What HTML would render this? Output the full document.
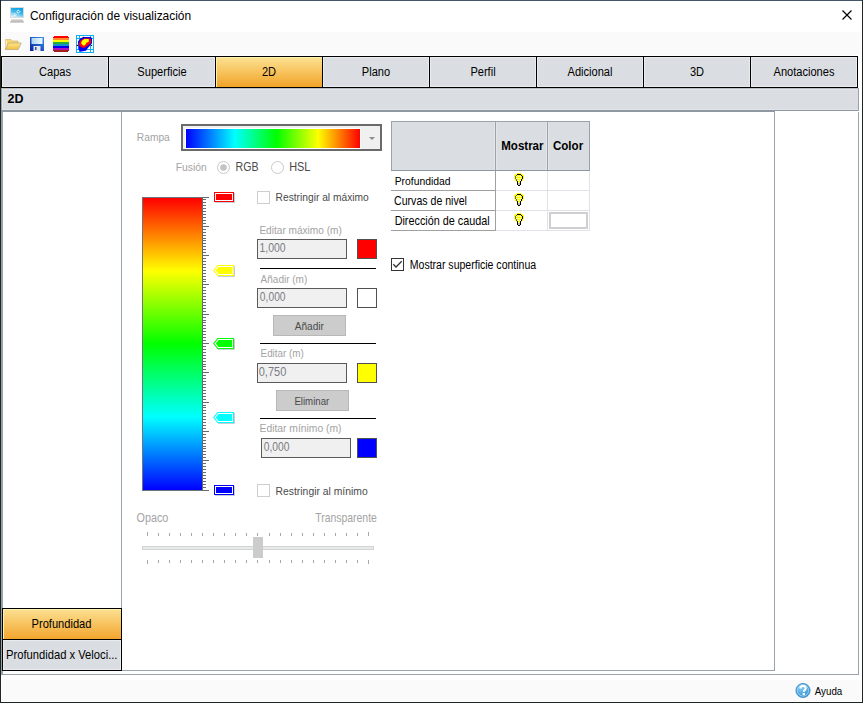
<!DOCTYPE html>
<html><head><meta charset="utf-8">
<style>
*{margin:0;padding:0;box-sizing:border-box}
html,body{width:863px;height:703px;overflow:hidden;background:#fff}
body{position:relative;font-family:"Liberation Sans",sans-serif;font-size:11px;color:#000}
.a{position:absolute}
.t{position:absolute;white-space:nowrap;line-height:16px;height:16px}
.tab{position:absolute;top:56px;height:32px;border:1px solid #000;background:#dadee2;box-shadow:inset 1px 1px 0 #e9ecef, inset -1px -1px 0 #e9ecef}
.tl{position:absolute;left:0;right:0;top:4px;text-align:center;font-size:11.1px;line-height:16px;white-space:nowrap}
.tb{position:absolute;height:20px;border:1px solid #5a5a5a;background:#f0f0f0}
.sw{position:absolute;width:20px;height:20px;border:1px solid #505050}
.sep{position:absolute;height:1px;background:#000;left:260px;width:116px}
.btn{position:absolute;background:#cccccc;border:1px solid #b8b8b8}
.cb{position:absolute;width:13px;height:13px;border:1px solid #cdcdcd;background:#fff}
</style></head>
<body>
<!-- window border -->
<div class="a" style="left:0;top:0;width:863px;height:1px;background:#44546a"></div>
<div class="a" style="left:0;top:0;width:1px;height:703px;background:#1e2620"></div>
<div class="a" style="left:862px;top:0;width:1px;height:703px;background:#1e2620"></div>
<div class="a" style="left:0;top:702px;width:863px;height:1px;background:#1e2620"></div>

<!-- title icon -->
<svg class="a" style="left:9px;top:7px" width="16" height="17" viewBox="0 0 16 17">
 <defs><linearGradient id="scr" x1=".7" y1="0" x2=".3" y2="1"><stop offset="0" stop-color="#00a0e4"/><stop offset=".5" stop-color="#40b8ec"/><stop offset="1" stop-color="#e4f4fb"/></linearGradient>
 <linearGradient id="kb" x1="0" y1="0" x2="0" y2="1"><stop offset="0" stop-color="#e4e4e4"/><stop offset="1" stop-color="#a8a8a8"/></linearGradient></defs>
 <rect x="1.5" y="0.5" width="13" height="10" fill="url(#scr)" stroke="#dcdcdc"/>
 <path d="M9.3 3L10.9 4.6L9.3 6.2L7.7 4.6Z" fill="none" stroke="#fff" stroke-width=".9"/>
 <path d="M6 6.3L7.3 7.6L6 8.9L4.7 7.6Z" fill="none" stroke="#fff" stroke-width=".8"/>
 <path d="M2.5 12H13.5L15 15.5H1Z" fill="url(#kb)"/>
</svg>
<!-- close X -->
<svg class="a" style="left:842px;top:10px" width="10" height="10"><path d="M0.5 0.5L9.5 9.5M9.5 0.5L0.5 9.5" stroke="#000" stroke-width="1.15"/></svg>

<!-- toolbar bg -->
<div class="a" style="left:2px;top:32px;width:859px;height:23px;background:#fafafa"></div>
<!-- folder -->
<svg class="a" style="left:5px;top:39px" width="17" height="11" viewBox="0 0 17 11">
 <defs><linearGradient id="fd" x1="0" y1="0" x2="0" y2="1"><stop offset="0" stop-color="#fde78e"/><stop offset="1" stop-color="#f2bf3c"/></linearGradient></defs>
 <path d="M0.5 0.5H6L7 2H13V4.5H3.2L0.5 10.5Z" fill="#f9d86a" stroke="#c8b070" stroke-width=".6"/>
 <path d="M1.2 1.5V9" stroke="#fff" stroke-width=".8"/>
 <path d="M3.4 4H16.2L13.2 10.5H0.6Z" fill="url(#fd)" stroke="#a89a78" stroke-width=".6"/>
</svg>
<!-- floppy -->
<svg class="a" style="left:30px;top:37px" width="14" height="14" viewBox="0 0 14 14">
 <defs><linearGradient id="fl" x1="0" y1="0" x2="1" y2="0"><stop offset="0" stop-color="#a8d4f0"/><stop offset="1" stop-color="#f0f8ff"/></linearGradient>
 <linearGradient id="fb" x1="0" y1="1" x2="1" y2="0"><stop offset="0" stop-color="#0a1e98"/><stop offset=".5" stop-color="#1e56c8"/><stop offset="1" stop-color="#3a9ae8"/></linearGradient></defs>
 <rect x="0" y="0" width="14" height="14" fill="url(#fb)"/>
 <rect x="1.5" y="1" width="11" height="6" fill="url(#fl)"/>
 <rect x="3.5" y="9" width="7" height="5" fill="#e8e8e8"/>
 <rect x="5" y="10" width="1.5" height="3" fill="#1d56c0"/>
</svg>
<!-- rainbow -->
<svg class="a" style="left:53px;top:36px" width="16" height="16" viewBox="0 0 16 16" shape-rendering="crispEdges">
 <path d="M1 0H15L16 1V15L15 16H1L0 15V1Z" fill="#a02020"/>
 <rect x="0" y="0" width="16" height="2" fill="#ff0000"/>
 <rect x="1" y="0" width="14" height="1" fill="#ff0000"/>
 <rect x="0" y="2" width="16" height="2" fill="#ff8c28"/>
 <rect x="0" y="4" width="16" height="2" fill="#ffff00"/>
 <rect x="0" y="6" width="16" height="2" fill="#20b040"/>
 <rect x="0" y="8" width="16" height="2" fill="#1890c8"/>
 <rect x="0" y="10" width="16" height="2" fill="#0000f0"/>
 <rect x="0" y="12" width="16" height="2" fill="#b010c0"/>
 <path d="M0 14H16V15L15 16H1L0 15Z" fill="#a02020"/>
 <rect x="0" y="0" width="1" height="1" fill="#f9f9f9"/><rect x="15" y="0" width="1" height="1" fill="#f9f9f9"/>
 <rect x="0" y="15" width="1" height="1" fill="#f9f9f9"/><rect x="15" y="15" width="1" height="1" fill="#f9f9f9"/>
</svg>
<!-- blob icon -->
<svg class="a" style="left:76px;top:35px" width="18" height="18" viewBox="0 0 18 18">
 <rect x="0" y="0" width="18" height="18" fill="#fff"/>
 <path d="M0.5 0.5H17.5V17.5H0.5Z M0.5 3.5H17.5 M0.5 14.5H17.5 M3.5 0.5V17.5 M14.5 0.5V17.5" stroke="#10b0f0" fill="none" shape-rendering="crispEdges"/>
 <path d="M7.4 2H14.9L16 3.5V8.3L11.5 13.6L9.9 15.8L4.3 16.8L2.4 14.3L2 6.5L4.3 3.5Z" fill="#0000f8"/>
 <path d="M8.3 3.2H12.4L15 3.9V8.3L11.1 11.1L8.6 12.7H6.1L3 10.5L3.2 7.4L5.2 4.9Z" fill="#ff0000"/>
 <path d="M8.3 4.1H12.7L13 6.5L10.5 7.7L9 10.2L7.4 10.8L5 8.3L6.1 5.8Z" fill="#ffff00"/>
 <circle cx="7.4" cy="2.4" r=".7" fill="#000"/><circle cx="1.4" cy="10.4" r=".7" fill="#000"/><circle cx="15.5" cy="10.4" r=".7" fill="#000"/>
</svg>

<!-- tabs -->
<div class="tab" style="left:1px;width:108px"></div>
<div class="tab" style="left:108px;width:108px"></div>
<div class="tab" style="left:215px;width:108px;background:linear-gradient(#fce392,#f2a328);box-shadow:inset 1px 1px 0 #fdf0b0"></div>
<div class="tab" style="left:322px;width:108px"></div>
<div class="tab" style="left:429px;width:108px"></div>
<div class="tab" style="left:536px;width:108px"></div>
<div class="tab" style="left:643px;width:108px"></div>
<div class="tab" style="left:750px;width:108px"></div>

<!-- section header -->
<div class="a" style="left:1px;top:88px;width:858px;height:23px;background:#dadee2;border-top:1px solid #b8bec4;border-left:1px solid #9aa3ab;border-right:1px solid #9aa3ab;border-bottom:1px solid #8f99a3;box-shadow:inset 1px 1px 0 #e3e6e9, inset 0 -1px 0 #e3e6e9"></div>

<!-- outer panel -->
<div class="a" style="left:1px;top:112px;width:858px;height:563px;border-left:2px solid #97a1aa;border-right:1px solid #9aa3ab;border-bottom:1px solid #9aa3ab;background:#fff"></div>
<!-- inner content panel -->
<div class="a" style="left:121px;top:112px;width:654px;height:559px;border-left:1px solid #9aa3ab;border-right:1px solid #9aa3ab;border-bottom:1px solid #9aa3ab;background:#fff"></div>

<div class="a" style="left:1px;top:111px;width:774px;height:1px;background:#8f99a3"></div>
<!-- left list buttons -->
<div class="a" style="left:2px;top:608px;width:120px;height:32px;border:1px solid #000;background:linear-gradient(#fce192,#f3a52e);box-shadow:inset 1px 1px 0 #fdf0b0"></div>
<div class="a" style="left:2px;top:639px;width:120px;height:32px;border:1px solid #000;background:#dadee2;box-shadow:inset 1px 1px 0 #e9ecef, inset -1px -1px 0 #e9ecef"></div>

<!-- Rampa combo -->
<div class="a" style="left:181px;top:124px;width:201px;height:27px;border:2px solid #6a6a6a;background:#f0f0f0"></div>
<div class="a" style="left:185px;top:128px;width:176px;height:21px;background:#fff"></div>
<div class="a" style="left:186px;top:129px;width:174px;height:19px;background:linear-gradient(90deg,#0000ff,#00ffff 28%,#00ff00 52%,#ffff00 76%,#ff0000)"></div>
<svg class="a" style="left:369px;top:137px" width="6" height="4"><path d="M0 0H6L3 3Z" fill="#8c8c8c"/></svg>

<!-- radios -->
<svg class="a" style="left:217px;top:161px" width="13" height="13"><circle cx="6.5" cy="6.5" r="6" fill="#fff" stroke="#c8c8c8"/><circle cx="6.5" cy="6.5" r="3.3" fill="#c4c4c4"/></svg>
<svg class="a" style="left:271px;top:161px" width="13" height="13"><circle cx="6.5" cy="6.5" r="6" fill="#fff" stroke="#c8c8c8"/></svg>

<!-- gradient bar -->
<div class="a" style="left:142px;top:197px;width:61px;height:294px;border-left:1px solid #6f7478;border-top:1px solid #6f7478;border-bottom:1px solid #6f7478;background:linear-gradient(#ff0000 0%,#ffff00 25%,#00ff00 50%,#00ffff 75%,#0000ff 100%)"></div>
<svg class="a" style="left:202px;top:197px" width="8" height="294" shape-rendering="crispEdges">
<rect x="0" y="0" width="1" height="294" fill="#636a70"/>
<rect x="0" y="0" width="7" height="1" fill="#636a70"/>
<rect x="0" y="2" width="4" height="1" fill="#636a70"/>
<rect x="0" y="5" width="4" height="1" fill="#636a70"/>
<rect x="0" y="8" width="4" height="1" fill="#636a70"/>
<rect x="0" y="11" width="4" height="1" fill="#636a70"/>
<rect x="0" y="14" width="4" height="1" fill="#636a70"/>
<rect x="0" y="17" width="4" height="1" fill="#636a70"/>
<rect x="0" y="20" width="4" height="1" fill="#636a70"/>
<rect x="0" y="23" width="4" height="1" fill="#636a70"/>
<rect x="0" y="26" width="4" height="1" fill="#636a70"/>
<rect x="0" y="29" width="7" height="1" fill="#636a70"/>
<rect x="0" y="32" width="4" height="1" fill="#636a70"/>
<rect x="0" y="35" width="4" height="1" fill="#636a70"/>
<rect x="0" y="38" width="4" height="1" fill="#636a70"/>
<rect x="0" y="41" width="4" height="1" fill="#636a70"/>
<rect x="0" y="43" width="4" height="1" fill="#636a70"/>
<rect x="0" y="46" width="4" height="1" fill="#636a70"/>
<rect x="0" y="49" width="4" height="1" fill="#636a70"/>
<rect x="0" y="52" width="4" height="1" fill="#636a70"/>
<rect x="0" y="55" width="4" height="1" fill="#636a70"/>
<rect x="0" y="58" width="7" height="1" fill="#636a70"/>
<rect x="0" y="61" width="4" height="1" fill="#636a70"/>
<rect x="0" y="64" width="4" height="1" fill="#636a70"/>
<rect x="0" y="67" width="4" height="1" fill="#636a70"/>
<rect x="0" y="70" width="4" height="1" fill="#636a70"/>
<rect x="0" y="73" width="4" height="1" fill="#636a70"/>
<rect x="0" y="76" width="4" height="1" fill="#636a70"/>
<rect x="0" y="79" width="4" height="1" fill="#636a70"/>
<rect x="0" y="82" width="4" height="1" fill="#636a70"/>
<rect x="0" y="84" width="4" height="1" fill="#636a70"/>
<rect x="0" y="87" width="7" height="1" fill="#636a70"/>
<rect x="0" y="90" width="4" height="1" fill="#636a70"/>
<rect x="0" y="93" width="4" height="1" fill="#636a70"/>
<rect x="0" y="96" width="4" height="1" fill="#636a70"/>
<rect x="0" y="99" width="4" height="1" fill="#636a70"/>
<rect x="0" y="102" width="4" height="1" fill="#636a70"/>
<rect x="0" y="105" width="4" height="1" fill="#636a70"/>
<rect x="0" y="108" width="4" height="1" fill="#636a70"/>
<rect x="0" y="111" width="4" height="1" fill="#636a70"/>
<rect x="0" y="114" width="4" height="1" fill="#636a70"/>
<rect x="0" y="117" width="7" height="1" fill="#636a70"/>
<rect x="0" y="120" width="4" height="1" fill="#636a70"/>
<rect x="0" y="123" width="4" height="1" fill="#636a70"/>
<rect x="0" y="125" width="4" height="1" fill="#636a70"/>
<rect x="0" y="128" width="4" height="1" fill="#636a70"/>
<rect x="0" y="131" width="4" height="1" fill="#636a70"/>
<rect x="0" y="134" width="4" height="1" fill="#636a70"/>
<rect x="0" y="137" width="4" height="1" fill="#636a70"/>
<rect x="0" y="140" width="4" height="1" fill="#636a70"/>
<rect x="0" y="143" width="4" height="1" fill="#636a70"/>
<rect x="0" y="146" width="7" height="1" fill="#636a70"/>
<rect x="0" y="149" width="4" height="1" fill="#636a70"/>
<rect x="0" y="152" width="4" height="1" fill="#636a70"/>
<rect x="0" y="155" width="4" height="1" fill="#636a70"/>
<rect x="0" y="158" width="4" height="1" fill="#636a70"/>
<rect x="0" y="161" width="4" height="1" fill="#636a70"/>
<rect x="0" y="164" width="4" height="1" fill="#636a70"/>
<rect x="0" y="167" width="4" height="1" fill="#636a70"/>
<rect x="0" y="169" width="4" height="1" fill="#636a70"/>
<rect x="0" y="172" width="4" height="1" fill="#636a70"/>
<rect x="0" y="175" width="7" height="1" fill="#636a70"/>
<rect x="0" y="178" width="4" height="1" fill="#636a70"/>
<rect x="0" y="181" width="4" height="1" fill="#636a70"/>
<rect x="0" y="184" width="4" height="1" fill="#636a70"/>
<rect x="0" y="187" width="4" height="1" fill="#636a70"/>
<rect x="0" y="190" width="4" height="1" fill="#636a70"/>
<rect x="0" y="193" width="4" height="1" fill="#636a70"/>
<rect x="0" y="196" width="4" height="1" fill="#636a70"/>
<rect x="0" y="199" width="4" height="1" fill="#636a70"/>
<rect x="0" y="202" width="4" height="1" fill="#636a70"/>
<rect x="0" y="205" width="7" height="1" fill="#636a70"/>
<rect x="0" y="208" width="4" height="1" fill="#636a70"/>
<rect x="0" y="210" width="4" height="1" fill="#636a70"/>
<rect x="0" y="213" width="4" height="1" fill="#636a70"/>
<rect x="0" y="216" width="4" height="1" fill="#636a70"/>
<rect x="0" y="219" width="4" height="1" fill="#636a70"/>
<rect x="0" y="222" width="4" height="1" fill="#636a70"/>
<rect x="0" y="225" width="4" height="1" fill="#636a70"/>
<rect x="0" y="228" width="4" height="1" fill="#636a70"/>
<rect x="0" y="231" width="4" height="1" fill="#636a70"/>
<rect x="0" y="234" width="7" height="1" fill="#636a70"/>
<rect x="0" y="237" width="4" height="1" fill="#636a70"/>
<rect x="0" y="240" width="4" height="1" fill="#636a70"/>
<rect x="0" y="243" width="4" height="1" fill="#636a70"/>
<rect x="0" y="246" width="4" height="1" fill="#636a70"/>
<rect x="0" y="249" width="4" height="1" fill="#636a70"/>
<rect x="0" y="251" width="4" height="1" fill="#636a70"/>
<rect x="0" y="254" width="4" height="1" fill="#636a70"/>
<rect x="0" y="257" width="4" height="1" fill="#636a70"/>
<rect x="0" y="260" width="4" height="1" fill="#636a70"/>
<rect x="0" y="263" width="7" height="1" fill="#636a70"/>
<rect x="0" y="266" width="4" height="1" fill="#636a70"/>
<rect x="0" y="269" width="4" height="1" fill="#636a70"/>
<rect x="0" y="272" width="4" height="1" fill="#636a70"/>
<rect x="0" y="275" width="4" height="1" fill="#636a70"/>
<rect x="0" y="278" width="4" height="1" fill="#636a70"/>
<rect x="0" y="281" width="4" height="1" fill="#636a70"/>
<rect x="0" y="284" width="4" height="1" fill="#636a70"/>
<rect x="0" y="287" width="4" height="1" fill="#636a70"/>
<rect x="0" y="290" width="4" height="1" fill="#636a70"/>
<rect x="0" y="293" width="7" height="1" fill="#636a70"/>
</svg>

<!-- markers -->
<svg class="a" style="left:214px;top:192px" width="21" height="11" shape-rendering="crispEdges"><rect x="0" y="0" width="20" height="10" fill="#ff0000"/><rect x="1" y="1" width="18" height="8" fill="#fff"/><rect x="2" y="2" width="16" height="6" fill="#ff0000"/><rect x="20" y="1" width="1" height="10" fill="#c8ccd4"/><rect x="1" y="10" width="20" height="1" fill="#c8ccd4"/></svg>
<svg class="a" style="left:213px;top:265px" width="23" height="12"><path d="M0 5.5L4.5 0H21V11H4.5Z" fill="#ffff00"/><path d="M1.4 5.5L5 1H20V10H5Z" fill="#fff"/><path d="M2.8 5.5L5.5 2H19V9H5.5Z" fill="#ffff00"/><path d="M21.5 1V11.5H5" fill="none" stroke="#c8ccd4" stroke-width="1"/></svg>
<svg class="a" style="left:213px;top:338px" width="23" height="12"><path d="M0 5.5L4.5 0H21V11H4.5Z" fill="#00ff00"/><path d="M1.4 5.5L5 1H20V10H5Z" fill="#fff"/><path d="M2.8 5.5L5.5 2H19V9H5.5Z" fill="#00ff00"/><path d="M21.5 1V11.5H5" fill="none" stroke="#c8ccd4" stroke-width="1"/></svg>
<svg class="a" style="left:213px;top:412px" width="23" height="12"><path d="M0 5.5L4.5 0H21V11H4.5Z" fill="#00ffff"/><path d="M1.4 5.5L5 1H20V10H5Z" fill="#fff"/><path d="M2.8 5.5L5.5 2H19V9H5.5Z" fill="#00ffff"/><path d="M21.5 1V11.5H5" fill="none" stroke="#c8ccd4" stroke-width="1"/></svg>
<svg class="a" style="left:214px;top:485px" width="21" height="11" shape-rendering="crispEdges"><rect x="0" y="0" width="20" height="10" fill="#0000ff"/><rect x="1" y="1" width="18" height="8" fill="#fff"/><rect x="2" y="2" width="16" height="6" fill="#0000ff"/><rect x="20" y="1" width="1" height="10" fill="#c8ccd4"/><rect x="1" y="10" width="20" height="1" fill="#c8ccd4"/></svg>

<!-- right column controls -->
<div class="cb" style="left:257px;top:191px"></div>
<div class="tb" style="left:257px;top:239px;width:90px"></div>
<div class="sw" style="left:357px;top:239px;background:#ff0000"></div>
<div class="sep" style="top:268px"></div>
<div class="tb" style="left:257px;top:288px;width:90px"></div>
<div class="sw" style="left:357px;top:288px;background:#fff"></div>
<div class="btn" style="left:273px;top:315px;width:73px;height:21px"></div>
<div class="sep" style="top:343px"></div>
<div class="tb" style="left:257px;top:363px;width:90px"></div>
<div class="sw" style="left:357px;top:363px;background:#ffff00"></div>
<div class="btn" style="left:276px;top:390px;width:73px;height:21px"></div>
<div class="sep" style="top:418px"></div>
<div class="tb" style="left:261px;top:438px;width:90px"></div>
<div class="sw" style="left:357px;top:438px;background:#0000ff"></div>
<div class="cb" style="left:257px;top:484px"></div>

<!-- slider -->
<div class="a" style="left:142px;top:546px;width:232px;height:4px;background:#e7eaea;border:1px solid #d4d4d4"></div>
<svg class="a" style="left:140px;top:530px" width="240" height="36" shape-rendering="crispEdges">
<rect x="7" y="2" width="1" height="4" fill="#a8a8a8"/><rect x="7" y="30" width="1" height="4" fill="#a8a8a8"/>
<rect x="18" y="3" width="1" height="3" fill="#a8a8a8"/><rect x="18" y="30" width="1" height="3" fill="#a8a8a8"/>
<rect x="29" y="3" width="1" height="3" fill="#a8a8a8"/><rect x="29" y="30" width="1" height="3" fill="#a8a8a8"/>
<rect x="40" y="3" width="1" height="3" fill="#a8a8a8"/><rect x="40" y="30" width="1" height="3" fill="#a8a8a8"/>
<rect x="51" y="3" width="1" height="3" fill="#a8a8a8"/><rect x="51" y="30" width="1" height="3" fill="#a8a8a8"/>
<rect x="62" y="3" width="1" height="3" fill="#a8a8a8"/><rect x="62" y="30" width="1" height="3" fill="#a8a8a8"/>
<rect x="73" y="3" width="1" height="3" fill="#a8a8a8"/><rect x="73" y="30" width="1" height="3" fill="#a8a8a8"/>
<rect x="84" y="3" width="1" height="3" fill="#a8a8a8"/><rect x="84" y="30" width="1" height="3" fill="#a8a8a8"/>
<rect x="95" y="3" width="1" height="3" fill="#a8a8a8"/><rect x="95" y="30" width="1" height="3" fill="#a8a8a8"/>
<rect x="106" y="3" width="1" height="3" fill="#a8a8a8"/><rect x="106" y="30" width="1" height="3" fill="#a8a8a8"/>
<rect x="117" y="3" width="1" height="3" fill="#a8a8a8"/><rect x="117" y="30" width="1" height="3" fill="#a8a8a8"/>
<rect x="129" y="3" width="1" height="3" fill="#a8a8a8"/><rect x="129" y="30" width="1" height="3" fill="#a8a8a8"/>
<rect x="140" y="3" width="1" height="3" fill="#a8a8a8"/><rect x="140" y="30" width="1" height="3" fill="#a8a8a8"/>
<rect x="151" y="3" width="1" height="3" fill="#a8a8a8"/><rect x="151" y="30" width="1" height="3" fill="#a8a8a8"/>
<rect x="162" y="3" width="1" height="3" fill="#a8a8a8"/><rect x="162" y="30" width="1" height="3" fill="#a8a8a8"/>
<rect x="173" y="3" width="1" height="3" fill="#a8a8a8"/><rect x="173" y="30" width="1" height="3" fill="#a8a8a8"/>
<rect x="184" y="3" width="1" height="3" fill="#a8a8a8"/><rect x="184" y="30" width="1" height="3" fill="#a8a8a8"/>
<rect x="195" y="3" width="1" height="3" fill="#a8a8a8"/><rect x="195" y="30" width="1" height="3" fill="#a8a8a8"/>
<rect x="206" y="3" width="1" height="3" fill="#a8a8a8"/><rect x="206" y="30" width="1" height="3" fill="#a8a8a8"/>
<rect x="217" y="3" width="1" height="3" fill="#a8a8a8"/><rect x="217" y="30" width="1" height="3" fill="#a8a8a8"/>
<rect x="228" y="2" width="1" height="4" fill="#a8a8a8"/><rect x="228" y="30" width="1" height="4" fill="#a8a8a8"/>
</svg>
<div class="a" style="left:253px;top:537px;width:10px;height:21px;background:#cccccc"></div>

<!-- table -->
<div class="a" style="left:391px;top:121px;width:199px;height:50px;background:#dadee2;border:1px solid #9aa3ab;border-bottom:1px solid #8d98a3"></div>
<div class="a" style="left:495px;top:122px;width:1px;height:48px;background:#9aa3ab;box-shadow:-1px 0 0 #e4e7ea,1px 0 0 #e4e7ea"></div>
<div class="a" style="left:547px;top:122px;width:1px;height:48px;background:#9aa3ab;box-shadow:-1px 0 0 #e4e7ea,1px 0 0 #e4e7ea"></div>
<div class="a" style="left:391px;top:171px;width:199px;height:60px;background:#fff"></div>
<div class="a" style="left:391px;top:190px;width:105px;height:1px;background:#a0a0a0"></div>
<div class="a" style="left:391px;top:210px;width:105px;height:1px;background:#a0a0a0"></div>
<div class="a" style="left:391px;top:230px;width:105px;height:1px;background:#a0a0a0"></div>
<div class="a" style="left:495px;top:171px;width:1px;height:60px;background:#a0a0a0"></div>
<div class="a" style="left:496px;top:190px;width:94px;height:1px;background:#dfe3e7"></div>
<div class="a" style="left:496px;top:210px;width:94px;height:1px;background:#dfe3e7"></div>
<div class="a" style="left:496px;top:230px;width:94px;height:1px;background:#dfe3e7"></div>
<div class="a" style="left:547px;top:171px;width:1px;height:60px;background:#dfe3e7"></div>
<div class="a" style="left:589px;top:171px;width:1px;height:60px;background:#dfe3e7"></div>
<div class="a" style="left:549px;top:212px;width:39px;height:17px;border:2px solid #cfcfcf;background:#fff"></div>
<svg class="a" style="left:514px;top:173px" width="10" height="13" shape-rendering="crispEdges"><rect x="3" y="0" width="1" height="1" fill="#ffff00"/><rect x="4" y="0" width="1" height="1" fill="#ffff00"/><rect x="5" y="0" width="1" height="1" fill="#ffff00"/><rect x="6" y="0" width="1" height="1" fill="#ffff00"/><rect x="1" y="1" width="1" height="1" fill="#ffff00"/><rect x="2" y="1" width="1" height="1" fill="#ffff00"/><rect x="3" y="1" width="1" height="1" fill="#000000"/><rect x="4" y="1" width="1" height="1" fill="#000000"/><rect x="5" y="1" width="1" height="1" fill="#000000"/><rect x="6" y="1" width="1" height="1" fill="#000000"/><rect x="7" y="1" width="1" height="1" fill="#ffff00"/><rect x="8" y="1" width="1" height="1" fill="#ffff00"/><rect x="0" y="2" width="1" height="1" fill="#ffff00"/><rect x="1" y="2" width="1" height="1" fill="#ffff00"/><rect x="2" y="2" width="1" height="1" fill="#606080"/><rect x="3" y="2" width="1" height="1" fill="#ffff00"/><rect x="4" y="2" width="1" height="1" fill="#ffff00"/><rect x="5" y="2" width="1" height="1" fill="#ffff00"/><rect x="6" y="2" width="1" height="1" fill="#ffff00"/><rect x="7" y="2" width="1" height="1" fill="#000000"/><rect x="8" y="2" width="1" height="1" fill="#ffff00"/><rect x="9" y="2" width="1" height="1" fill="#ffff00"/><rect x="0" y="3" width="1" height="1" fill="#ffff00"/><rect x="1" y="3" width="1" height="1" fill="#606080"/><rect x="2" y="3" width="1" height="1" fill="#ffffff"/><rect x="3" y="3" width="1" height="1" fill="#ffff00"/><rect x="4" y="3" width="1" height="1" fill="#ffffff"/><rect x="5" y="3" width="1" height="1" fill="#ffff00"/><rect x="6" y="3" width="1" height="1" fill="#ffffff"/><rect x="7" y="3" width="1" height="1" fill="#ffff00"/><rect x="8" y="3" width="1" height="1" fill="#000000"/><rect x="9" y="3" width="1" height="1" fill="#ffff00"/><rect x="0" y="4" width="1" height="1" fill="#ffff00"/><rect x="1" y="4" width="1" height="1" fill="#606080"/><rect x="2" y="4" width="1" height="1" fill="#ffff00"/><rect x="3" y="4" width="1" height="1" fill="#ffff00"/><rect x="4" y="4" width="1" height="1" fill="#ffff00"/><rect x="5" y="4" width="1" height="1" fill="#ffff00"/><rect x="6" y="4" width="1" height="1" fill="#ffff00"/><rect x="7" y="4" width="1" height="1" fill="#ffff00"/><rect x="8" y="4" width="1" height="1" fill="#000000"/><rect x="9" y="4" width="1" height="1" fill="#ffff00"/><rect x="0" y="5" width="1" height="1" fill="#ffff00"/><rect x="1" y="5" width="1" height="1" fill="#606080"/><rect x="2" y="5" width="1" height="1" fill="#ffffff"/><rect x="3" y="5" width="1" height="1" fill="#ffff00"/><rect x="4" y="5" width="1" height="1" fill="#ffffff"/><rect x="5" y="5" width="1" height="1" fill="#ffff00"/><rect x="6" y="5" width="1" height="1" fill="#ffffff"/><rect x="7" y="5" width="1" height="1" fill="#ffff00"/><rect x="8" y="5" width="1" height="1" fill="#000000"/><rect x="9" y="5" width="1" height="1" fill="#ffff00"/><rect x="1" y="6" width="1" height="1" fill="#ffff00"/><rect x="2" y="6" width="1" height="1" fill="#606080"/><rect x="3" y="6" width="1" height="1" fill="#ffff00"/><rect x="4" y="6" width="1" height="1" fill="#ffff00"/><rect x="5" y="6" width="1" height="1" fill="#ffff00"/><rect x="6" y="6" width="1" height="1" fill="#ffff00"/><rect x="7" y="6" width="1" height="1" fill="#000000"/><rect x="8" y="6" width="1" height="1" fill="#ffff00"/><rect x="1" y="7" width="1" height="1" fill="#ffff00"/><rect x="2" y="7" width="1" height="1" fill="#606080"/><rect x="3" y="7" width="1" height="1" fill="#ffff00"/><rect x="4" y="7" width="1" height="1" fill="#ffffff"/><rect x="5" y="7" width="1" height="1" fill="#ffff00"/><rect x="6" y="7" width="1" height="1" fill="#ffffff"/><rect x="7" y="7" width="1" height="1" fill="#000000"/><rect x="8" y="7" width="1" height="1" fill="#ffff00"/><rect x="2" y="8" width="1" height="1" fill="#ffff00"/><rect x="3" y="8" width="1" height="1" fill="#000000"/><rect x="4" y="8" width="1" height="1" fill="#ffff00"/><rect x="5" y="8" width="1" height="1" fill="#ffff00"/><rect x="6" y="8" width="1" height="1" fill="#000000"/><rect x="7" y="8" width="1" height="1" fill="#ffff00"/><rect x="3" y="9" width="1" height="1" fill="#000000"/><rect x="4" y="9" width="1" height="1" fill="#ffffff"/><rect x="5" y="9" width="1" height="1" fill="#ffff00"/><rect x="6" y="9" width="1" height="1" fill="#000000"/><rect x="3" y="10" width="1" height="1" fill="#000000"/><rect x="4" y="10" width="1" height="1" fill="#b8b8b8"/><rect x="5" y="10" width="1" height="1" fill="#b8b8b8"/><rect x="6" y="10" width="1" height="1" fill="#000000"/><rect x="3" y="11" width="1" height="1" fill="#000000"/><rect x="4" y="11" width="1" height="1" fill="#b8b8b8"/><rect x="5" y="11" width="1" height="1" fill="#b8b8b8"/><rect x="6" y="11" width="1" height="1" fill="#000000"/><rect x="4" y="12" width="1" height="1" fill="#000000"/><rect x="5" y="12" width="1" height="1" fill="#000000"/></svg>
<svg class="a" style="left:514px;top:193px" width="10" height="13" shape-rendering="crispEdges"><rect x="3" y="0" width="1" height="1" fill="#ffff00"/><rect x="4" y="0" width="1" height="1" fill="#ffff00"/><rect x="5" y="0" width="1" height="1" fill="#ffff00"/><rect x="6" y="0" width="1" height="1" fill="#ffff00"/><rect x="1" y="1" width="1" height="1" fill="#ffff00"/><rect x="2" y="1" width="1" height="1" fill="#ffff00"/><rect x="3" y="1" width="1" height="1" fill="#000000"/><rect x="4" y="1" width="1" height="1" fill="#000000"/><rect x="5" y="1" width="1" height="1" fill="#000000"/><rect x="6" y="1" width="1" height="1" fill="#000000"/><rect x="7" y="1" width="1" height="1" fill="#ffff00"/><rect x="8" y="1" width="1" height="1" fill="#ffff00"/><rect x="0" y="2" width="1" height="1" fill="#ffff00"/><rect x="1" y="2" width="1" height="1" fill="#ffff00"/><rect x="2" y="2" width="1" height="1" fill="#606080"/><rect x="3" y="2" width="1" height="1" fill="#ffff00"/><rect x="4" y="2" width="1" height="1" fill="#ffff00"/><rect x="5" y="2" width="1" height="1" fill="#ffff00"/><rect x="6" y="2" width="1" height="1" fill="#ffff00"/><rect x="7" y="2" width="1" height="1" fill="#000000"/><rect x="8" y="2" width="1" height="1" fill="#ffff00"/><rect x="9" y="2" width="1" height="1" fill="#ffff00"/><rect x="0" y="3" width="1" height="1" fill="#ffff00"/><rect x="1" y="3" width="1" height="1" fill="#606080"/><rect x="2" y="3" width="1" height="1" fill="#ffffff"/><rect x="3" y="3" width="1" height="1" fill="#ffff00"/><rect x="4" y="3" width="1" height="1" fill="#ffffff"/><rect x="5" y="3" width="1" height="1" fill="#ffff00"/><rect x="6" y="3" width="1" height="1" fill="#ffffff"/><rect x="7" y="3" width="1" height="1" fill="#ffff00"/><rect x="8" y="3" width="1" height="1" fill="#000000"/><rect x="9" y="3" width="1" height="1" fill="#ffff00"/><rect x="0" y="4" width="1" height="1" fill="#ffff00"/><rect x="1" y="4" width="1" height="1" fill="#606080"/><rect x="2" y="4" width="1" height="1" fill="#ffff00"/><rect x="3" y="4" width="1" height="1" fill="#ffff00"/><rect x="4" y="4" width="1" height="1" fill="#ffff00"/><rect x="5" y="4" width="1" height="1" fill="#ffff00"/><rect x="6" y="4" width="1" height="1" fill="#ffff00"/><rect x="7" y="4" width="1" height="1" fill="#ffff00"/><rect x="8" y="4" width="1" height="1" fill="#000000"/><rect x="9" y="4" width="1" height="1" fill="#ffff00"/><rect x="0" y="5" width="1" height="1" fill="#ffff00"/><rect x="1" y="5" width="1" height="1" fill="#606080"/><rect x="2" y="5" width="1" height="1" fill="#ffffff"/><rect x="3" y="5" width="1" height="1" fill="#ffff00"/><rect x="4" y="5" width="1" height="1" fill="#ffffff"/><rect x="5" y="5" width="1" height="1" fill="#ffff00"/><rect x="6" y="5" width="1" height="1" fill="#ffffff"/><rect x="7" y="5" width="1" height="1" fill="#ffff00"/><rect x="8" y="5" width="1" height="1" fill="#000000"/><rect x="9" y="5" width="1" height="1" fill="#ffff00"/><rect x="1" y="6" width="1" height="1" fill="#ffff00"/><rect x="2" y="6" width="1" height="1" fill="#606080"/><rect x="3" y="6" width="1" height="1" fill="#ffff00"/><rect x="4" y="6" width="1" height="1" fill="#ffff00"/><rect x="5" y="6" width="1" height="1" fill="#ffff00"/><rect x="6" y="6" width="1" height="1" fill="#ffff00"/><rect x="7" y="6" width="1" height="1" fill="#000000"/><rect x="8" y="6" width="1" height="1" fill="#ffff00"/><rect x="1" y="7" width="1" height="1" fill="#ffff00"/><rect x="2" y="7" width="1" height="1" fill="#606080"/><rect x="3" y="7" width="1" height="1" fill="#ffff00"/><rect x="4" y="7" width="1" height="1" fill="#ffffff"/><rect x="5" y="7" width="1" height="1" fill="#ffff00"/><rect x="6" y="7" width="1" height="1" fill="#ffffff"/><rect x="7" y="7" width="1" height="1" fill="#000000"/><rect x="8" y="7" width="1" height="1" fill="#ffff00"/><rect x="2" y="8" width="1" height="1" fill="#ffff00"/><rect x="3" y="8" width="1" height="1" fill="#000000"/><rect x="4" y="8" width="1" height="1" fill="#ffff00"/><rect x="5" y="8" width="1" height="1" fill="#ffff00"/><rect x="6" y="8" width="1" height="1" fill="#000000"/><rect x="7" y="8" width="1" height="1" fill="#ffff00"/><rect x="3" y="9" width="1" height="1" fill="#000000"/><rect x="4" y="9" width="1" height="1" fill="#ffffff"/><rect x="5" y="9" width="1" height="1" fill="#ffff00"/><rect x="6" y="9" width="1" height="1" fill="#000000"/><rect x="3" y="10" width="1" height="1" fill="#000000"/><rect x="4" y="10" width="1" height="1" fill="#b8b8b8"/><rect x="5" y="10" width="1" height="1" fill="#b8b8b8"/><rect x="6" y="10" width="1" height="1" fill="#000000"/><rect x="3" y="11" width="1" height="1" fill="#000000"/><rect x="4" y="11" width="1" height="1" fill="#b8b8b8"/><rect x="5" y="11" width="1" height="1" fill="#b8b8b8"/><rect x="6" y="11" width="1" height="1" fill="#000000"/><rect x="4" y="12" width="1" height="1" fill="#000000"/><rect x="5" y="12" width="1" height="1" fill="#000000"/></svg>
<svg class="a" style="left:514px;top:213px" width="10" height="13" shape-rendering="crispEdges"><rect x="3" y="0" width="1" height="1" fill="#ffff00"/><rect x="4" y="0" width="1" height="1" fill="#ffff00"/><rect x="5" y="0" width="1" height="1" fill="#ffff00"/><rect x="6" y="0" width="1" height="1" fill="#ffff00"/><rect x="1" y="1" width="1" height="1" fill="#ffff00"/><rect x="2" y="1" width="1" height="1" fill="#ffff00"/><rect x="3" y="1" width="1" height="1" fill="#000000"/><rect x="4" y="1" width="1" height="1" fill="#000000"/><rect x="5" y="1" width="1" height="1" fill="#000000"/><rect x="6" y="1" width="1" height="1" fill="#000000"/><rect x="7" y="1" width="1" height="1" fill="#ffff00"/><rect x="8" y="1" width="1" height="1" fill="#ffff00"/><rect x="0" y="2" width="1" height="1" fill="#ffff00"/><rect x="1" y="2" width="1" height="1" fill="#ffff00"/><rect x="2" y="2" width="1" height="1" fill="#606080"/><rect x="3" y="2" width="1" height="1" fill="#ffff00"/><rect x="4" y="2" width="1" height="1" fill="#ffff00"/><rect x="5" y="2" width="1" height="1" fill="#ffff00"/><rect x="6" y="2" width="1" height="1" fill="#ffff00"/><rect x="7" y="2" width="1" height="1" fill="#000000"/><rect x="8" y="2" width="1" height="1" fill="#ffff00"/><rect x="9" y="2" width="1" height="1" fill="#ffff00"/><rect x="0" y="3" width="1" height="1" fill="#ffff00"/><rect x="1" y="3" width="1" height="1" fill="#606080"/><rect x="2" y="3" width="1" height="1" fill="#ffffff"/><rect x="3" y="3" width="1" height="1" fill="#ffff00"/><rect x="4" y="3" width="1" height="1" fill="#ffffff"/><rect x="5" y="3" width="1" height="1" fill="#ffff00"/><rect x="6" y="3" width="1" height="1" fill="#ffffff"/><rect x="7" y="3" width="1" height="1" fill="#ffff00"/><rect x="8" y="3" width="1" height="1" fill="#000000"/><rect x="9" y="3" width="1" height="1" fill="#ffff00"/><rect x="0" y="4" width="1" height="1" fill="#ffff00"/><rect x="1" y="4" width="1" height="1" fill="#606080"/><rect x="2" y="4" width="1" height="1" fill="#ffff00"/><rect x="3" y="4" width="1" height="1" fill="#ffff00"/><rect x="4" y="4" width="1" height="1" fill="#ffff00"/><rect x="5" y="4" width="1" height="1" fill="#ffff00"/><rect x="6" y="4" width="1" height="1" fill="#ffff00"/><rect x="7" y="4" width="1" height="1" fill="#ffff00"/><rect x="8" y="4" width="1" height="1" fill="#000000"/><rect x="9" y="4" width="1" height="1" fill="#ffff00"/><rect x="0" y="5" width="1" height="1" fill="#ffff00"/><rect x="1" y="5" width="1" height="1" fill="#606080"/><rect x="2" y="5" width="1" height="1" fill="#ffffff"/><rect x="3" y="5" width="1" height="1" fill="#ffff00"/><rect x="4" y="5" width="1" height="1" fill="#ffffff"/><rect x="5" y="5" width="1" height="1" fill="#ffff00"/><rect x="6" y="5" width="1" height="1" fill="#ffffff"/><rect x="7" y="5" width="1" height="1" fill="#ffff00"/><rect x="8" y="5" width="1" height="1" fill="#000000"/><rect x="9" y="5" width="1" height="1" fill="#ffff00"/><rect x="1" y="6" width="1" height="1" fill="#ffff00"/><rect x="2" y="6" width="1" height="1" fill="#606080"/><rect x="3" y="6" width="1" height="1" fill="#ffff00"/><rect x="4" y="6" width="1" height="1" fill="#ffff00"/><rect x="5" y="6" width="1" height="1" fill="#ffff00"/><rect x="6" y="6" width="1" height="1" fill="#ffff00"/><rect x="7" y="6" width="1" height="1" fill="#000000"/><rect x="8" y="6" width="1" height="1" fill="#ffff00"/><rect x="1" y="7" width="1" height="1" fill="#ffff00"/><rect x="2" y="7" width="1" height="1" fill="#606080"/><rect x="3" y="7" width="1" height="1" fill="#ffff00"/><rect x="4" y="7" width="1" height="1" fill="#ffffff"/><rect x="5" y="7" width="1" height="1" fill="#ffff00"/><rect x="6" y="7" width="1" height="1" fill="#ffffff"/><rect x="7" y="7" width="1" height="1" fill="#000000"/><rect x="8" y="7" width="1" height="1" fill="#ffff00"/><rect x="2" y="8" width="1" height="1" fill="#ffff00"/><rect x="3" y="8" width="1" height="1" fill="#000000"/><rect x="4" y="8" width="1" height="1" fill="#ffff00"/><rect x="5" y="8" width="1" height="1" fill="#ffff00"/><rect x="6" y="8" width="1" height="1" fill="#000000"/><rect x="7" y="8" width="1" height="1" fill="#ffff00"/><rect x="3" y="9" width="1" height="1" fill="#000000"/><rect x="4" y="9" width="1" height="1" fill="#ffffff"/><rect x="5" y="9" width="1" height="1" fill="#ffff00"/><rect x="6" y="9" width="1" height="1" fill="#000000"/><rect x="3" y="10" width="1" height="1" fill="#000000"/><rect x="4" y="10" width="1" height="1" fill="#b8b8b8"/><rect x="5" y="10" width="1" height="1" fill="#b8b8b8"/><rect x="6" y="10" width="1" height="1" fill="#000000"/><rect x="3" y="11" width="1" height="1" fill="#000000"/><rect x="4" y="11" width="1" height="1" fill="#b8b8b8"/><rect x="5" y="11" width="1" height="1" fill="#b8b8b8"/><rect x="6" y="11" width="1" height="1" fill="#000000"/><rect x="4" y="12" width="1" height="1" fill="#000000"/><rect x="5" y="12" width="1" height="1" fill="#000000"/></svg>

<div class="cb" style="left:391px;top:258px;border-color:#333"></div>
<svg class="a" style="left:391px;top:258px" width="13" height="13"><path d="M2.3 6.3L5 9L10.7 3.3" fill="none" stroke="#333" stroke-width="1.3"/></svg>

<!-- status bar -->
<div class="a" style="left:2px;top:680px;width:859px;height:21px;background:#fafafa"></div>
<svg class="a" style="left:795px;top:683px" width="16" height="16" viewBox="0 0 16 16">
 <defs><radialGradient id="hg" cx=".4" cy=".3" r=".8"><stop offset="0" stop-color="#86ccf2"/><stop offset="1" stop-color="#2a8ad0"/></radialGradient></defs>
 <circle cx="8" cy="7.5" r="7.1" fill="url(#hg)" stroke="#3a8cc4" stroke-width=".8"/>
 <circle cx="8" cy="7.5" r="5.6" fill="none" stroke="#b8e2f8" stroke-width=".7"/>
 <path d="M5.3 5.4C5.3 3.9 6.5 3 8 3S10.7 3.9 10.7 5.3C10.7 6.9 8.8 7 8.8 8.7" fill="none" stroke="#fff" stroke-width="2.1"/>
 <rect x="7.7" y="10" width="2.2" height="2.1" fill="#fff"/>
</svg>

<div class="t" style="left:29.90px;top:8.0px;font-size:11.95px;font-weight:normal;color:#000">Configuración de visualización</div>
<div class="t" style="left:136.86px;top:130.0px;font-size:10.21px;font-weight:normal;color:#a3a3a3;transform:scaleY(1.14);transform-origin:0 11px">Rampa</div>
<div class="t" style="left:175.77px;top:160.0px;font-size:10.35px;font-weight:normal;color:#a3a3a3;transform:scaleY(1.14);transform-origin:0 11px">Fusión</div>
<div class="t" style="left:235.54px;top:159.0px;font-size:10.59px;font-weight:normal;color:#4a4a4a;transform:scaleY(1.14);transform-origin:0 12px">RGB</div>
<div class="t" style="left:289.13px;top:159.0px;font-size:10.93px;font-weight:normal;color:#4a4a4a;transform:scaleY(1.14);transform-origin:0 12px">HSL</div>
<div class="t" style="left:275.58px;top:190.0px;font-size:10.22px;font-weight:normal;color:#4a4a4a;transform:scaleY(1.14);transform-origin:0 11px">Restringir al máximo</div>
<div class="t" style="left:259.39px;top:223.0px;font-size:10.11px;font-weight:normal;color:#a3a3a3;transform:scaleY(1.14);transform-origin:0 11px">Editar máximo (m)</div>
<div class="t" style="left:259.43px;top:241.0px;font-size:10.46px;font-weight:normal;color:#7c7c84;transform:scaleY(1.2);transform-origin:0 11px">1,000</div>
<div class="t" style="left:260.60px;top:272.0px;font-size:10.00px;font-weight:normal;color:#a3a3a3;transform:scaleY(1.14);transform-origin:0 11px">Añadir (m)</div>
<div class="t" style="left:259.87px;top:290.0px;font-size:10.27px;font-weight:normal;color:#7c7c84;transform:scaleY(1.2);transform-origin:0 11px">0,000</div>
<div class="t" style="left:294.70px;top:319.0px;font-size:10.11px;font-weight:normal;color:#4a4a4a;transform:scaleY(1.14);transform-origin:0 11px">Añadir</div>
<div class="t" style="left:260.59px;top:346.0px;font-size:9.86px;font-weight:normal;color:#a3a3a3;transform:scaleY(1.14);transform-origin:0 11px">Editar (m)</div>
<div class="t" style="left:258.76px;top:364.0px;font-size:11.01px;font-weight:normal;color:#7c7c84;transform:scaleY(1.2);transform-origin:0 12px">0,750</div>
<div class="t" style="left:294.39px;top:394.0px;font-size:9.67px;font-weight:normal;color:#4a4a4a;transform:scaleY(1.14);transform-origin:0 11px">Eliminar</div>
<div class="t" style="left:259.57px;top:421.0px;font-size:10.32px;font-weight:normal;color:#a3a3a3;transform:scaleY(1.14);transform-origin:0 11px">Editar mínimo (m)</div>
<div class="t" style="left:263.67px;top:440.0px;font-size:10.30px;font-weight:normal;color:#7c7c84;transform:scaleY(1.2);transform-origin:0 11px">0,000</div>
<div class="t" style="left:275.57px;top:484.0px;font-size:10.36px;font-weight:normal;color:#4a4a4a;transform:scaleY(1.14);transform-origin:0 11px">Restringir al mínimo</div>
<div class="t" style="left:136.55px;top:510.0px;font-size:10.80px;font-weight:normal;color:#a3a3a3;transform:scaleY(1.14);transform-origin:0 12px">Opaco</div>
<div class="t" style="left:315.19px;top:511.0px;font-size:10.44px;font-weight:normal;color:#a3a3a3;transform:scaleY(1.14);transform-origin:0 11px">Transparente</div>
<div class="t" style="left:501.28px;top:138.0px;font-size:11.53px;font-weight:bold;color:#000;transform:scaleY(1.05);transform-origin:0 12px">Mostrar</div>
<div class="t" style="left:552.93px;top:138.0px;font-size:11.58px;font-weight:bold;color:#000;transform:scaleY(1.05);transform-origin:0 12px">Color</div>
<div class="t" style="left:394.65px;top:174.0px;font-size:10.39px;font-weight:normal;color:#000;transform:scaleY(1.14);transform-origin:0 11px">Profundidad</div>
<div class="t" style="left:394.07px;top:193.0px;font-size:10.58px;font-weight:normal;color:#000;transform:scaleY(1.14);transform-origin:0 12px">Curvas de nivel</div>
<div class="t" style="left:394.63px;top:213.0px;font-size:10.83px;font-weight:normal;color:#000;transform:scaleY(1.14);transform-origin:0 12px">Dirección de caudal</div>
<div class="t" style="left:409.76px;top:257.0px;font-size:10.54px;font-weight:normal;color:#000;transform:scaleY(1.14);transform-origin:0 12px">Mostrar superficie continua</div>
<div class="t" style="left:31.51px;top:616.0px;font-size:11.14px;font-weight:normal;color:#000;transform:scaleY(1.14);transform-origin:0 12px">Profundidad</div>
<div class="t" style="left:6.00px;top:647.0px;font-size:11.21px;font-weight:normal;color:#000;transform:scaleY(1.14);transform-origin:0 12px">Profundidad x Veloci...</div>
<div class="t" style="left:814.70px;top:684.0px;font-size:9.80px;font-weight:normal;color:#000;transform:scaleY(1.14);transform-origin:0 11px">Ayuda</div>
<div class="t" style="left:7.62px;top:91.0px;font-size:12.50px;font-weight:bold;color:#000">2D</div>
<div class="t" style="left:1px;width:108px;text-align:center;top:64.0px;font-size:11.08px;transform:scaleY(1.12);transform-origin:0 12px">Capas</div>
<div class="t" style="left:108px;width:108px;text-align:center;top:64.0px;font-size:11.08px;transform:scaleY(1.12);transform-origin:0 12px">Superficie</div>
<div class="t" style="left:215px;width:108px;text-align:center;top:64.0px;font-size:11.08px;transform:scaleY(1.12);transform-origin:0 12px">2D</div>
<div class="t" style="left:322px;width:108px;text-align:center;top:64.0px;font-size:11.08px;transform:scaleY(1.12);transform-origin:0 12px">Plano</div>
<div class="t" style="left:429px;width:108px;text-align:center;top:64.0px;font-size:11.08px;transform:scaleY(1.12);transform-origin:0 12px">Perfil</div>
<div class="t" style="left:536px;width:108px;text-align:center;top:64.0px;font-size:11.08px;transform:scaleY(1.12);transform-origin:0 12px">Adicional</div>
<div class="t" style="left:643px;width:108px;text-align:center;top:64.0px;font-size:11.08px;transform:scaleY(1.12);transform-origin:0 12px">3D</div>
<div class="t" style="left:750px;width:108px;text-align:center;top:64.0px;font-size:11.08px;transform:scaleY(1.12);transform-origin:0 12px">Anotaciones</div>
</body></html>
